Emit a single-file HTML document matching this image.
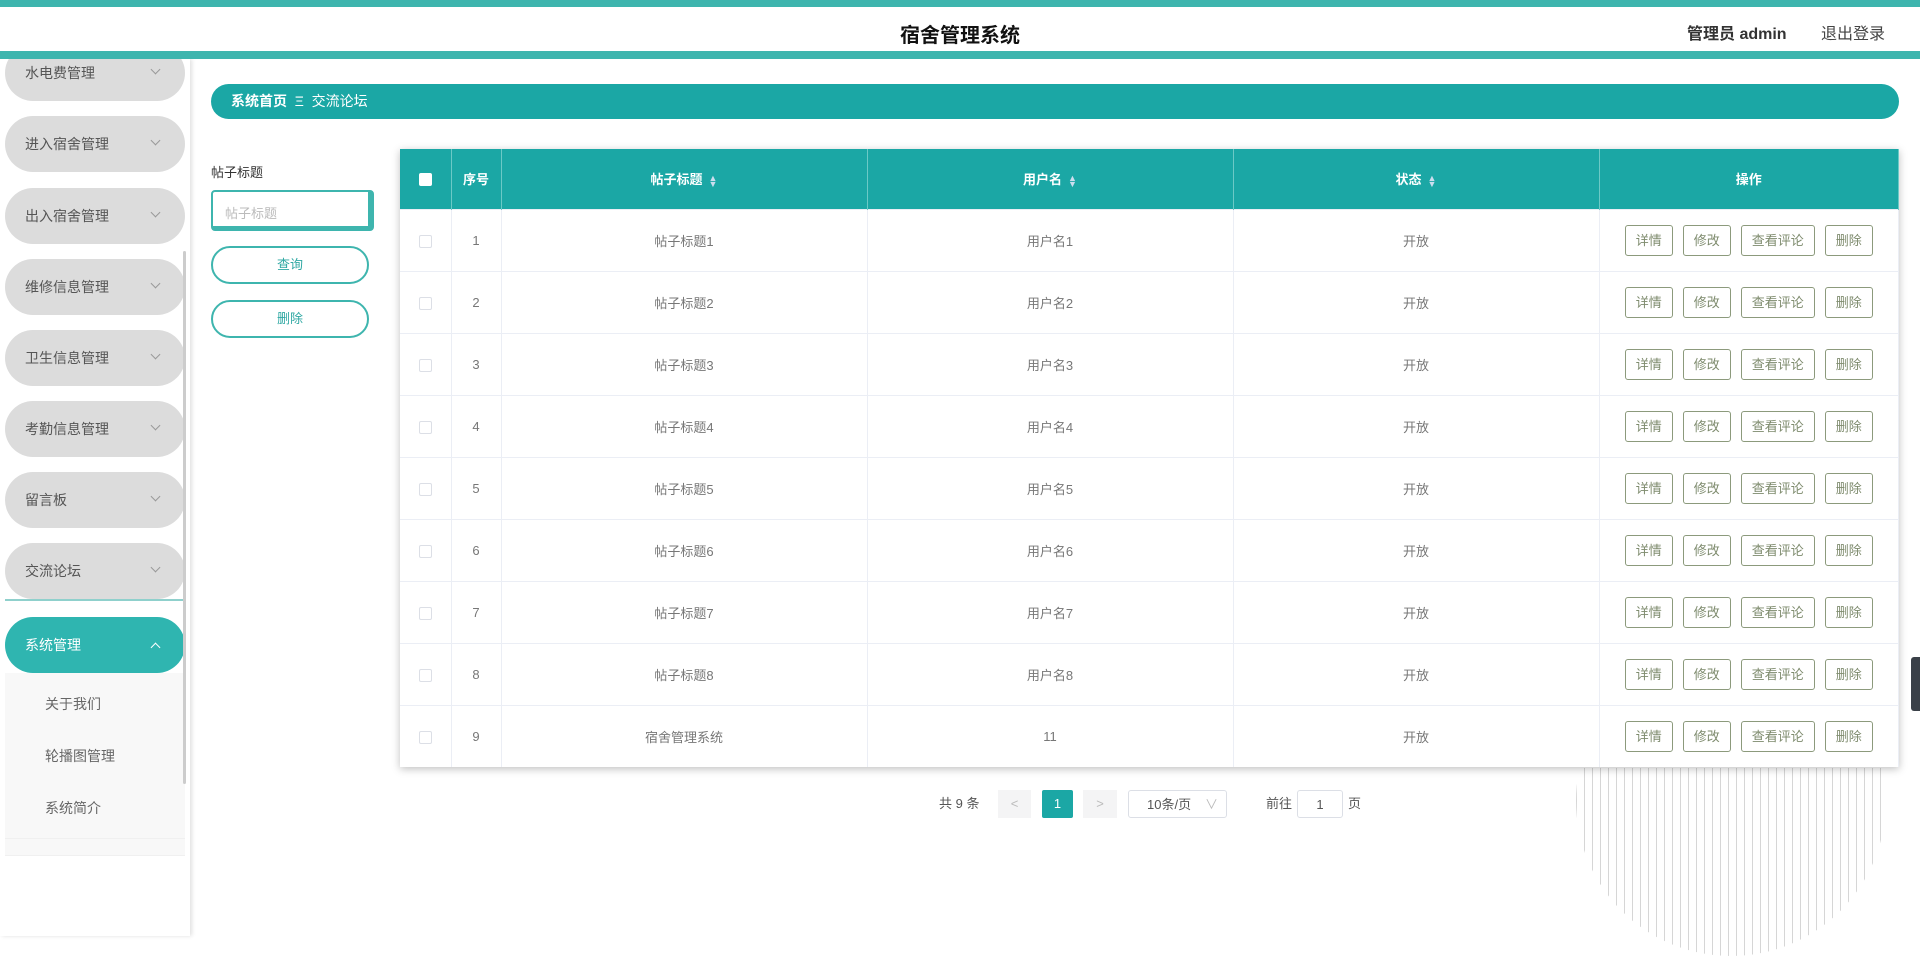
<!DOCTYPE html>
<html><head><meta charset="utf-8"><style>
*{box-sizing:border-box;margin:0;padding:0}
body{width:1920px;height:936px;overflow:hidden;background:#fff;font-family:"Liberation Sans","Noto Sans CJK SC",sans-serif;position:relative;color:#333}
.top{position:absolute;left:0;top:0;width:1920px;height:59px;background:#fff;border-top:7px solid #3eb5ae;border-bottom:8px solid #3eb5ae;z-index:5}
.title{position:absolute;left:0;width:1920px;text-align:center;top:12px;font-size:20px;font-weight:bold;color:#111}
.user{position:absolute;left:1687px;top:13px;font-size:16px;font-weight:bold;color:#333}
.logout{position:absolute;left:1821px;top:13px;font-size:16px;color:#444}
.side{position:absolute;left:0;top:59px;width:190px;height:877px;background:#fff;box-shadow:2px 0 4px rgba(0,0,0,.12);overflow:hidden}
.mi{position:absolute;left:5px;width:180px;height:56px;border-radius:28px;background:#dcdcdc;font-size:14px;color:#555;padding-left:20px;line-height:56px}
.mi:after{content:"";position:absolute;right:26px;top:21px;width:6px;height:6px;border-right:1px solid #999;border-bottom:1px solid #999;transform:rotate(45deg)}
.mi.act{background:#2fb5b0;color:#fff}
.mi.act:after{border-color:#fff;transform:rotate(-135deg);top:27px}
.sub{position:absolute;left:5px;width:180px;height:62px;background:#f8f8f8;font-size:14px;color:#666;padding-left:40px;line-height:62px;border-bottom:1px solid #f0f0f0}
.crumb{position:absolute;left:211px;top:84px;width:1688px;height:35px;border-radius:18px;background:#1ba7a5;color:#fff;font-size:14px;line-height:35px;padding-left:20px}
.lbl{position:absolute;left:211px;top:162px;font-size:13px;color:#333}
.inp{position:absolute;left:211px;top:190px;width:163px;height:41px;border:2px solid #3eb5ae;border-right-width:6px;border-bottom-width:5px;border-radius:4px;font-size:13px;color:#bbb;padding:11px 12px}
.btn{position:absolute;left:211px;width:158px;height:38px;border:2px solid #3eb5ae;border-radius:19px;text-align:center;line-height:34px;font-size:13px;color:#2fa8a3}
table{position:absolute;left:400px;top:149px;width:1499px;border-collapse:collapse;box-shadow:0 2px 8px rgba(0,0,0,.25);background:#fff;font-size:13px;z-index:2}
th{background:#1ba7a5;color:#fff;height:60px;border-right:1px solid #6cc9c6;font-weight:bold;font-size:13px}
td{height:62px;border-top:1px solid #ebeef5;border-right:1px solid #ebeef5;text-align:center;color:#777;vertical-align:middle}
.cb{display:inline-block;width:13px;height:13px;border:1px solid #dcdfe6;border-radius:2px;background:#fff;vertical-align:middle}
th .cb{border-color:#fff}
.ob{display:inline-block;height:31px;border:1px solid #8c9a7c;border-radius:3px;color:#7e8b6d;font-size:13px;line-height:29px;padding:0 10px;margin:0 5px}
.sort{display:inline-block;margin-left:6px;font-size:9px;line-height:6px;vertical-align:middle;color:#cde}
.pg{position:absolute;top:790px;font-size:13px;color:#555;height:28px;line-height:28px}
.stripes{position:absolute;left:1576px;top:646px;width:310px;height:310px;border-radius:50%;background:repeating-linear-gradient(90deg,#d6d6d6 0 1px,transparent 1px 8px);clip-path:inset(122px 0 0 0)}
</style></head><body>
<div class="top"><div class="title">宿舍管理系统</div><div class="user">管理员 admin</div><div class="logout">退出登录</div></div>
<div class="side">
<div class="mi" style="top:-14px">水电费管理</div>
<div class="mi" style="top:57px">进入宿舍管理</div>
<div class="mi" style="top:129px">出入宿舍管理</div>
<div class="mi" style="top:200px">维修信息管理</div>
<div class="mi" style="top:271px">卫生信息管理</div>
<div class="mi" style="top:342px">考勤信息管理</div>
<div class="mi" style="top:413px">留言板</div>
<div class="mi" style="top:484px">交流论坛</div>
<div style="position:absolute;left:5px;top:540px;width:180px;height:2px;background:#8fd0cc"></div>
<div class="mi act" style="top:558px">系统管理</div>
<div class="sub" style="top:614px">关于我们</div>
<div class="sub" style="top:666px">轮播图管理</div>
<div class="sub" style="top:718px">系统简介</div>
<div class="sub" style="top:780px;height:17px"></div>
<div style="position:absolute;left:183px;top:192px;width:3px;height:533px;background:#ccc;border-radius:2px"></div>
</div>
<div class="crumb"><b>系统首页</b>&nbsp; Ξ &nbsp;交流论坛</div>
<div class="lbl">帖子标题</div>
<div class="inp">帖子标题</div>
<div class="btn" style="top:246px">查询</div>
<div class="btn" style="top:300px">删除</div>
<div class="stripes"></div>
<table>
<tr><th style="width:51px"><span class="cb"></span></th><th style="width:50px">序号</th><th style="width:366px">帖子标题<span class="sort">▲<br>▼</span></th><th style="width:366px">用户名<span class="sort">▲<br>▼</span></th><th style="width:366px">状态<span class="sort">▲<br>▼</span></th><th>操作</th></tr>
<tr><td><span class="cb"></span></td><td>1</td><td>帖子标题1</td><td>用户名1</td><td>开放</td><td><span class="ob">详情</span><span class="ob">修改</span><span class="ob">查看评论</span><span class="ob">删除</span></td></tr>
<tr><td><span class="cb"></span></td><td>2</td><td>帖子标题2</td><td>用户名2</td><td>开放</td><td><span class="ob">详情</span><span class="ob">修改</span><span class="ob">查看评论</span><span class="ob">删除</span></td></tr>
<tr><td><span class="cb"></span></td><td>3</td><td>帖子标题3</td><td>用户名3</td><td>开放</td><td><span class="ob">详情</span><span class="ob">修改</span><span class="ob">查看评论</span><span class="ob">删除</span></td></tr>
<tr><td><span class="cb"></span></td><td>4</td><td>帖子标题4</td><td>用户名4</td><td>开放</td><td><span class="ob">详情</span><span class="ob">修改</span><span class="ob">查看评论</span><span class="ob">删除</span></td></tr>
<tr><td><span class="cb"></span></td><td>5</td><td>帖子标题5</td><td>用户名5</td><td>开放</td><td><span class="ob">详情</span><span class="ob">修改</span><span class="ob">查看评论</span><span class="ob">删除</span></td></tr>
<tr><td><span class="cb"></span></td><td>6</td><td>帖子标题6</td><td>用户名6</td><td>开放</td><td><span class="ob">详情</span><span class="ob">修改</span><span class="ob">查看评论</span><span class="ob">删除</span></td></tr>
<tr><td><span class="cb"></span></td><td>7</td><td>帖子标题7</td><td>用户名7</td><td>开放</td><td><span class="ob">详情</span><span class="ob">修改</span><span class="ob">查看评论</span><span class="ob">删除</span></td></tr>
<tr><td><span class="cb"></span></td><td>8</td><td>帖子标题8</td><td>用户名8</td><td>开放</td><td><span class="ob">详情</span><span class="ob">修改</span><span class="ob">查看评论</span><span class="ob">删除</span></td></tr>
<tr><td><span class="cb"></span></td><td>9</td><td>宿舍管理系统</td><td>11</td><td>开放</td><td><span class="ob">详情</span><span class="ob">修改</span><span class="ob">查看评论</span><span class="ob">删除</span></td></tr>
</table>
<div class="pg" style="left:939px">共 9 条</div>
<div class="pg" style="left:998px;width:33px;background:#f4f4f5;color:#bbb;text-align:center">&lt;</div>
<div class="pg" style="left:1042px;width:31px;background:#1ba7a5;color:#fff;text-align:center;border-radius:2px">1</div>
<div class="pg" style="left:1083px;width:34px;background:#f4f4f5;color:#bbb;text-align:center">&gt;</div>
<div class="pg" style="left:1128px;width:99px;border:1px solid #dcdfe6;border-radius:3px;padding-left:18px">10条/页<span style="position:absolute;right:8px;color:#bbb">∨</span></div>
<div class="pg" style="left:1266px">前往</div>
<div class="pg" style="left:1297px;width:46px;border:1px solid #dcdfe6;border-radius:3px;text-align:center">1</div>
<div class="pg" style="left:1348px">页</div>
<div style="position:absolute;left:1911px;top:657px;width:9px;height:54px;background:#3a4048;border-radius:3px 0 0 3px"></div>
</body></html>
